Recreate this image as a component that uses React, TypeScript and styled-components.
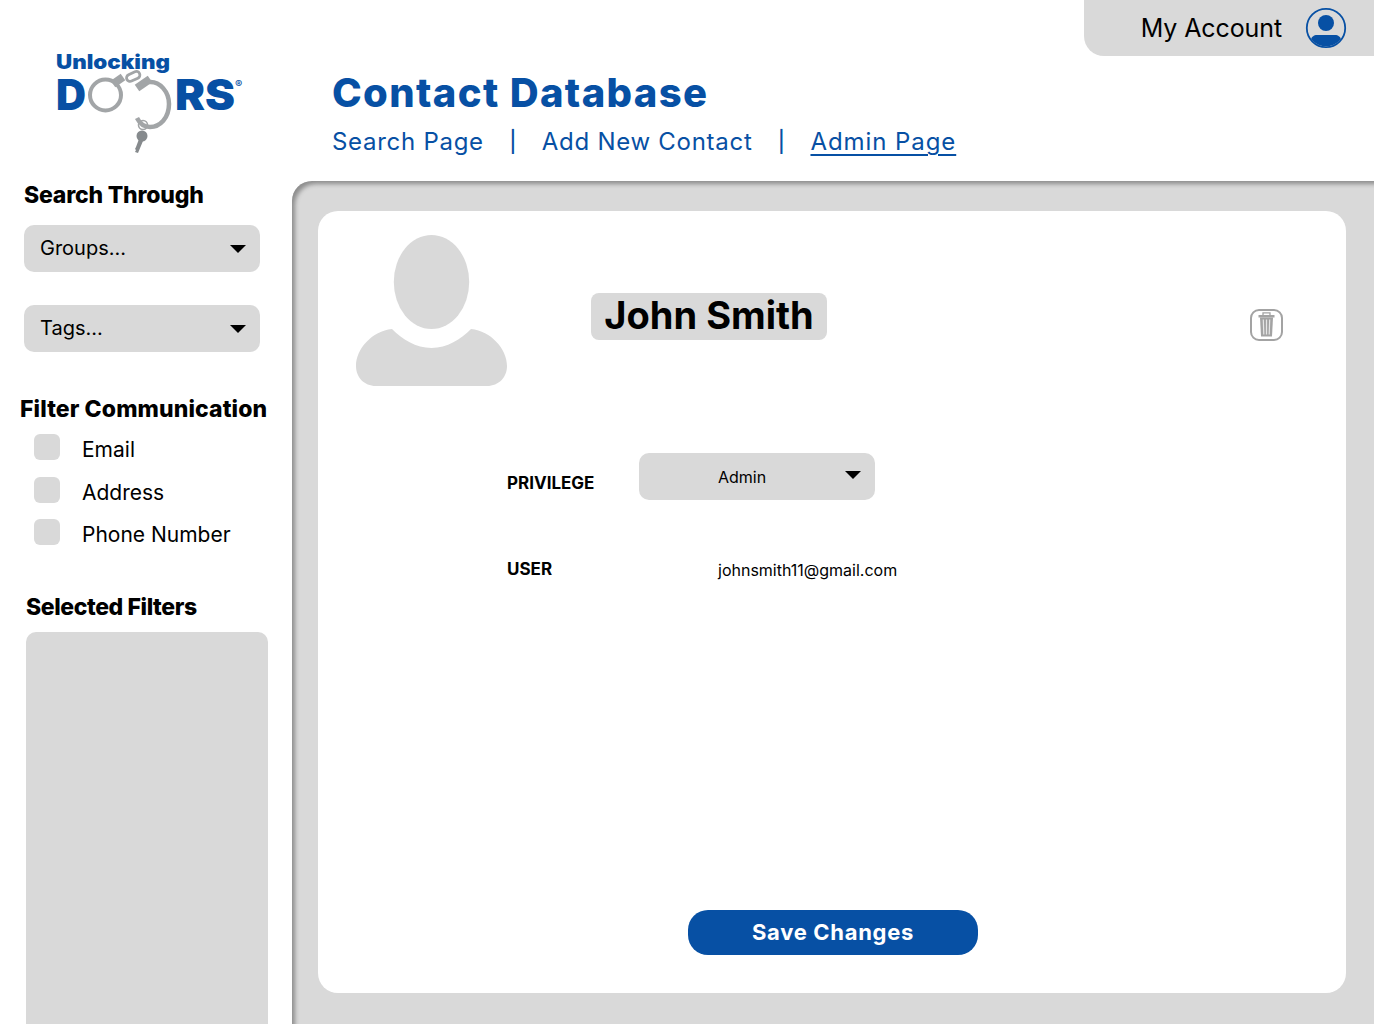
import React from "react";
import styled, { createGlobalStyle } from "styled-components";

const BLUE = "#0750a4";
const GREY = "#d9d9d9";
const FONT = `Inter, "Liberation Sans", sans-serif`;

const Global = createGlobalStyle`
  html, body { margin: 0; padding: 0; background: #fff; }
  body { font-family: ${FONT}; color: #000; }
  * { box-sizing: border-box; }
`;

const Page = styled.div`
  width: 1374px;
  height: 1024px;
  overflow: hidden;
  display: flex;
  flex-direction: column;
`;
const Header = styled.header`
  height: 181px;
  flex: none;
  display: flex;
  align-items: flex-start;
`;
const LogoSlot = styled.div`
  width: 332px;
  flex: none;
  padding: 48px 0 0 52px;
`;
const Titles = styled.div`
  flex: 1;
  padding-top: 69px;
`;
const Title = styled.h1`
  margin: 0;
  height: 48px;
  font-size: 40px;
  line-height: 48px;
  font-weight: 800;
  color: ${BLUE};
  letter-spacing: 1.36px;
  white-space: nowrap;
`;
const Nav = styled.nav`
  display: flex;
  align-items: center;
  margin-top: 9px;
  height: 32px;
`;
const NavLink = styled.a<{ $active?: boolean }>`
  font-size: 24px;
  line-height: 32px;
  color: ${BLUE};
  letter-spacing: ${(p) => (p.$active ? "0.92px" : "0.72px")};
  text-decoration: ${(p) => (p.$active ? "underline" : "none")};
  text-underline-offset: 4px;
  text-decoration-thickness: 1.5px;
`;
const NavSep = styled.span`
  font-size: 21px;
  font-weight: 500;
  line-height: 32px;
  color: ${BLUE};
  width: 58px;
  text-align: center;
`;
const Account = styled.div`
  width: 290px;
  height: 56px;
  flex: none;
  background: ${GREY};
  border-bottom-left-radius: 20px;
  display: flex;
  align-items: center;
  justify-content: flex-end;
  gap: 23px;
  padding-right: 27px;
  font-size: 25px;
  letter-spacing: -0.1px;
`;
const Body = styled.div`
  flex: 1;
  display: flex;
  min-height: 0;
`;
const Sidebar = styled.aside`
  width: 292px;
  flex: none;
  display: flex;
  flex-direction: column;
`;
const SideHeading = styled.h2<{ $x: number; $top: number; $ls: number }>`
  margin: ${(p) => p.$top}px 0 0 ${(p) => p.$x}px;
  font-size: 23px;
  line-height: 28px;
  font-weight: 800;
  letter-spacing: ${(p) => p.$ls}px;
  white-space: nowrap;
`;
const Select = styled.div<{ $w: number; $fs: number; $pl: number; $pr: number; $top?: number; $left?: number }>`
  width: ${(p) => p.$w}px;
  height: 47px;
  margin-top: ${(p) => p.$top ?? 0}px;
  margin-left: ${(p) => p.$left ?? 0}px;
  background: ${GREY};
  border-radius: 10px;
  display: flex;
  align-items: center;
  justify-content: space-between;
  padding: 0 ${(p) => p.$pr}px 0 ${(p) => p.$pl}px;
  font-size: ${(p) => p.$fs}px;
`;
const SelectText = styled.span<{ $dy: number }>`
  margin-top: ${(p) => p.$dy}px;
`;
const Caret = styled.span<{ $up?: number }>`
  width: 0;
  height: 0;
  border-left: 8.5px solid transparent;
  border-right: 8.5px solid transparent;
  border-top: 8px solid #000;
  margin-bottom: ${(p) => p.$up ?? 0}px;
`;
const Checks = styled.div`
  display: flex;
  flex-direction: column;
  margin: 11px 0 0 34px;
  gap: 16px;
`;
const CheckRow = styled.label`
  display: flex;
  align-items: flex-start;
  gap: 22px;
  height: 26.5px;
  font-size: 21px;
  line-height: 26px;
`;
const Box = styled.span`
  width: 26px;
  height: 26px;
  border-radius: 6px;
  background: ${GREY};
  flex: none;
`;
const CheckLabel = styled.span`
  margin-top: 3px;
`;
const FilterBox = styled.div`
  flex: 1;
  width: 242px;
  margin: 11px 0 0 26px;
  background: ${GREY};
  border-radius: 10px 10px 0 0;
`;
const Main = styled.main`
  flex: 1;
  background: ${GREY};
  border-top-left-radius: 20px;
  box-shadow: inset 4px 4px 4px -1px #8e8e8e;
  padding: 30px 28px 31px 26px;
  display: flex;
`;
const Card = styled.section`
  flex: 1;
  background: #fff;
  border-radius: 20px;
  padding: 24px 63px 38px 38px;
  display: flex;
  flex-direction: column;
`;
const Profile = styled.div`
  display: flex;
  align-items: flex-start;
  justify-content: space-between;
`;
const NameTag = styled.div`
  height: 47px;
  width: 236px;
  margin: 58px 0 0 84px;
  background: ${GREY};
  border-radius: 8px;
  font-size: 38px;
  font-weight: 700;
  line-height: 44px;
  text-align: center;
  white-space: nowrap;
`;
const ProfileLeft = styled.div`
  display: flex;
  align-items: flex-start;
`;
const Trash = styled.div`
  margin-top: 74px;
  line-height: 0;
`;
const Field = styled.div<{ $top: number }>`
  display: flex;
  align-items: center;
  margin: ${(p) => p.$top}px 0 0 151px;
`;
const FieldLabel = styled.div<{ $dy: number }>`
  width: 132px;
  font-size: 17px;
  font-weight: 700;
  margin-top: ${(p) => p.$dy}px;
`;
const FieldValue = styled.div`
  margin-left: 79px;
  font-size: 16px;
  margin-top: 2px;
`;
const SaveWrap = styled.div`
  margin-top: auto;
  padding-left: 332px;
`;
const Save = styled.button`
  width: 290px;
  height: 45px;
  border: 0;
  border-radius: 20px;
  background: ${BLUE};
  color: #fff;
  font-family: ${FONT};
  font-size: 22px;
  font-weight: 700;
  letter-spacing: 0.7px;
  padding: 0 0 2px;
`;

const Logo = () => (
  <svg width="200" height="106" viewBox="0 0 200 106">
    <defs>
      <linearGradient id="steel" x1="0" y1="0" x2="1" y2="1">
        <stop offset="0" stopColor="#c6c8ca" />
        <stop offset="0.5" stopColor="#8f9295" />
        <stop offset="1" stopColor="#a9acae" />
      </linearGradient>
    </defs>
    <text x="4" y="21" fontFamily={FONT} fontSize="20" fontWeight="900" fill={BLUE} textLength="114" lengthAdjust="spacingAndGlyphs">Unlocking</text>
    <text x="4" y="62" fontFamily={FONT} fontSize="42" fontWeight="900" fill={BLUE} textLength="30" lengthAdjust="spacingAndGlyphs">D</text>
    <text x="123" y="62" fontFamily={FONT} fontSize="42" fontWeight="900" fill={BLUE} textLength="60" lengthAdjust="spacingAndGlyphs">RS</text>
    <text x="183" y="40" fontFamily={FONT} fontSize="11" fontWeight="700" fill={BLUE}>®</text>
    <g fill="none" stroke="#a2a5a7">
      <circle cx="53.500" cy="47" r="15.500" strokeWidth="4" />
      <path d="M61 36L71 29" strokeWidth="8" />
      <rect x="74" y="25" width="14" height="7" rx="3.500" strokeWidth="2.800" transform="rotate(-25 81 28)" />
      <path d="M85 40L98 31" strokeWidth="8" />
      <path d="M97 34C108 33 117 44 117 56C117 70 108 79 98 79C93 79 88 76 85 70" strokeWidth="4.500" />
      <circle cx="91" cy="77" r="4.500" strokeWidth="1.600" />
    </g>
    <g fill="#868a8d">
      <circle cx="90" cy="88" r="5.500" />
      <path d="M87 91l4 2l-5 12l-3-1l1-2l-1-1l1-2z" />
    </g>
  </svg>
);

const UserIcon = () => (
  <svg width="42" height="42" viewBox="0 0 42 42">
    <defs>
      <clipPath id="ucl"><circle cx="21" cy="21" r="18.5" /></clipPath>
    </defs>
    <circle cx="21" cy="21" r="19.2" fill="none" stroke={BLUE} strokeWidth="1.8" />
    <circle cx="21" cy="16" r="8" fill={BLUE} />
    <path d="M6 39v-6c0-3 3-5 6-5h18c3 0 6 2 6 5v6z" fill={BLUE} clipPath="url(#ucl)" />
  </svg>
);

const TrashIcon = () => (
  <svg width="33" height="32" viewBox="0 0 33 32">
    <rect x="1" y="1" width="31" height="30" rx="8" fill="none" stroke="#a3a3a3" strokeWidth="2" />
    <path d="M13 6V3.800h7V6" fill="none" stroke="#a3a3a3" strokeWidth="1.300" />
    <path d="M8.500 6h16v2.500h-16z" fill="#a3a3a3" />
    <path d="M10 8.500h13l-1 19h-11z" fill="#a3a3a3" />
    <path d="M13.300 10.500l.5 15M16.500 10.500v15M19.700 10.500l-.5 15" stroke="#e6e6e6" strokeWidth="1.200" />
  </svg>
);

const Avatar = () => (
  <svg width="151" height="151" viewBox="0 0 151 151">
    <ellipse cx="75.500" cy="47" rx="37.700" ry="47" fill={GREY} />
    <path d="M36 94c10 10 24 19 39.500 19s29.500-9 39.500-19c20 2 36 20 36 37c0 11-8 20-20 20h-111c-12 0-20-9-20-20c0-17 16-35 36-37z" fill={GREY} />
  </svg>
);

export default function App() {
  return (
    <Page>
      <Global />
      <Header>
        <LogoSlot><Logo /></LogoSlot>
        <Titles>
          <Title>Contact Database</Title>
          <Nav>
            <NavLink>Search Page</NavLink>
            <NavSep>|</NavSep>
            <NavLink>Add New Contact</NavLink>
            <NavSep>|</NavSep>
            <NavLink $active>Admin Page</NavLink>
          </Nav>
        </Titles>
        <Account>
          My Account
          <UserIcon />
        </Account>
      </Header>
      <Body>
        <Sidebar>
          <SideHeading $x={24} $top={0} $ls={-0.2}>Search Through</SideHeading>
          <Select $w={236} $fs={20} $pl={16} $pr={14} $top={16} $left={24}><SelectText $dy={-2}>Groups...</SelectText><Caret /></Select>
          <Select $w={236} $fs={20} $pl={16} $pr={14} $top={33} $left={24}><SelectText $dy={-2}>Tags...</SelectText><Caret /></Select>
          <SideHeading $x={20} $top={43} $ls={0.1}>Filter Communication</SideHeading>
          <Checks>
            <CheckRow><Box /><CheckLabel>Email</CheckLabel></CheckRow>
            <CheckRow><Box /><CheckLabel>Address</CheckLabel></CheckRow>
            <CheckRow><Box /><CheckLabel>Phone Number</CheckLabel></CheckRow>
          </Checks>
          <SideHeading $x={26} $top={47} $ls={-0.4}>Selected Filters</SideHeading>
          <FilterBox />
        </Sidebar>
        <Main>
          <Card>
            <Profile>
              <ProfileLeft>
                <Avatar />
                <NameTag>John Smith</NameTag>
              </ProfileLeft>
              <Trash><TrashIcon /></Trash>
            </Profile>
            <Field $top={67}>
              <FieldLabel $dy={12}>PRIVILEGE</FieldLabel>
              <Select $w={236} $fs={16} $pl={79} $pr={14}><SelectText $dy={0}>Admin</SelectText><Caret $up={3} /></Select>
            </Field>
            <Field $top={58}>
              <FieldLabel $dy={0}>USER</FieldLabel>
              <FieldValue>johnsmith11@gmail.com</FieldValue>
            </Field>
            <SaveWrap><Save>Save Changes</Save></SaveWrap>
          </Card>
        </Main>
      </Body>
    </Page>
  );
}
